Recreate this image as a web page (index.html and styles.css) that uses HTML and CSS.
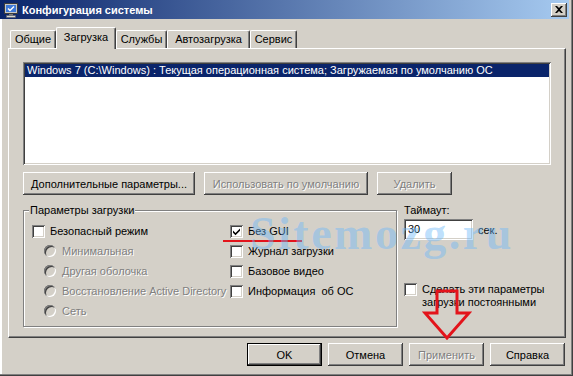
FILE: index.html
```html
<!DOCTYPE html>
<html lang="ru">
<head>
<meta charset="utf-8">
<title>Конфигурация системы</title>
<link rel="stylesheet" href="styles.css">
</head>
<body>
<div class="window">
  <div class="titlebar">
    <svg class="app-icon" width="16" height="16" viewBox="0 0 16 16">
      <rect x="1.5" y="1.5" width="13" height="10" fill="#c8c8c8" stroke="#3c3c3c"/>
      <rect x="3" y="3" width="10" height="7" fill="#3d78d8"/>
      <path d="M5 6.5l2 2 4-4" stroke="#fff" stroke-width="1.4" fill="none"/>
      <rect x="6" y="12" width="4" height="1.5" fill="#7a7a7a"/>
      <rect x="3.5" y="13.5" width="9" height="2" fill="#d8d8d8" stroke="#606060" stroke-width="0.6"/>
    </svg>
    <span class="title">Конфигурация системы</span>
    <button class="close" aria-label="Закрыть">
      <svg width="8" height="7" viewBox="0 0 8 7"><path d="M0 0h2l2 2 2-2h2L5 3.5 8 7H6L4 5 2 7H0l3-3.5z" fill="#000"/></svg>
    </button>
  </div>

  <div class="tabs">
    <div class="tab t1">Общие</div>
    <div class="tab tab-active t2">Загрузка</div>
    <div class="tab t3">Службы</div>
    <div class="tab t4">Автозагрузка</div>
    <div class="tab t5">Сервис</div>
  </div>

  <div class="panel">
    <div class="listbox">
      <div class="list-item selected">Windows 7 (C:\Windows) : Текущая операционная система; Загружаемая по умолчанию ОС</div>
    </div>

    <div class="btn-row">
      <button class="btn w-adv">Дополнительные параметры...</button>
      <button class="btn w-def" disabled>Использовать по умолчанию</button>
      <button class="btn w-del" disabled>Удалить</button>
    </div>

    <div class="lower">
      <fieldset class="group">
        <legend>Параметры загрузки</legend>
        <div class="grid">
          <label class="opt c1 r1"><span class="cb"></span>Безопасный режим</label>
          <label class="opt c1 r2 radio disabled"><span class="rb"></span>Минимальная</label>
          <label class="opt c1 r3 radio disabled"><span class="rb"></span>Другая оболочка</label>
          <label class="opt c1 r4 radio disabled"><span class="rb"></span>Восстановление Active Directory</label>
          <label class="opt c1 r5 radio disabled"><span class="rb"></span>Сеть</label>
          <label class="opt c2 r1"><span class="cb checked"><svg width="9" height="9" viewBox="0 0 9 9"><path d="M1 3.5l2.5 2.5L8 1.5v2.2L3.5 8.2 1 5.7z" fill="#000"/></svg></span>Без GUI</label>
          <label class="opt c2 r2"><span class="cb"></span>Журнал загрузки</label>
          <label class="opt c2 r3"><span class="cb"></span>Базовое видео</label>
          <label class="opt c2 r4"><span class="cb"></span>Информация&nbsp; об ОС</label>
        </div>
      </fieldset>

      <div class="side">
        <div class="timeout-label">Таймаут:</div>
        <div class="timeout-row">
          <div class="input">30</div>
          <span class="unit">сек.</span>
        </div>
        <label class="opt persist"><span class="cb"></span><span class="persist-text">Сделать эти параметры<br>загрузки постоянными</span></label>
      </div>
    </div>
  </div>

  <div class="footer">
    <button class="btn btn-foot default">OK</button>
    <button class="btn btn-foot">Отмена</button>
    <button class="btn btn-foot" disabled>Применить</button>
    <button class="btn btn-foot">Справка</button>
  </div>

  <div class="underline"></div>
  <div class="watermark">Sitemozg.ru</div>
  <svg class="arrow" width="50" height="56" viewBox="0 0 50 56">
    <polygon points="15,3 35,3 35,25 47,25 25,50 3,25 15,25" fill="none" stroke="#e3141b" stroke-width="3" stroke-linejoin="miter"/>
  </svg>
</div>
</body>
</html>
```

FILE: styles.css
```css
* { box-sizing: border-box; }
html, body { margin: 0; padding: 0; }
body {
  width: 573px;
  height: 376px;
  overflow: hidden;
  background: #d4d0c8;
  font-family: "Liberation Sans", Arial, sans-serif;
  font-size: 11px;
  color: #000;
}

.window {
  position: relative;
  width: 573px;
  height: 376px;
  background: #d4d0c8;
  padding: 0 4px 0 0;
  display: flex;
  flex-direction: column;
  box-shadow: inset -1px -1px #404040, inset -2px -2px #808080, inset 2px 0 #fff;
}

/* Title bar */
.titlebar {
  height: 19px;
  display: flex;
  align-items: center;
  padding-left: 3px;
  background: linear-gradient(to right, #0a246a, #a6caf0);
}
.app-icon { flex: none; }
.title {
  margin-left: 3px;
  color: #fff;
  font-weight: bold;
  font-size: 11px;
  white-space: nowrap;
}
.close {
  margin-left: auto;
  margin-right: 2px;
  width: 16px;
  height: 14px;
  padding: 0;
  border: 0;
  background: #d4d0c8;
  display: flex;
  align-items: center;
  justify-content: center;
  box-shadow: inset -1px -1px #404040, inset 1px 1px #fff, inset -2px -2px #808080, inset 2px 2px #d4d0c8;
}

/* Tabs */
.tabs {
  margin-top: 8px;
  height: 21px;
  display: flex;
  align-items: flex-end;
  padding-left: 10px;
  position: relative;
  z-index: 1;
}
.tab {
  height: 18px;
  display: flex;
  align-items: center;
  justify-content: center;
  background: #d4d0c8;
  border-left: 1px solid #fff;
  border-top: 1px solid #fff;
  border-right: 1px solid #404040;
  border-radius: 2px 2px 0 0;
  box-shadow: inset -1px 0 #808080;
  white-space: nowrap;
  padding-bottom: 1px;
}
.t1 { width: 46px; }
.t2 { width: 60px; }
.t3 { width: 51px; }
.t4 { width: 83px; }
.t5 { width: 47px; }
.tab-active {
  height: 22px;
  margin-bottom: -1px;
  padding-bottom: 3px;
}

/* Panel */
.panel {
  margin-left: 8px;
  width: 558px;
  height: 290px;
  padding: 13px 14px 0 14px;
  border-top: 1px solid #fff;
  border-left: 1px solid #fff;
  border-right: 1px solid #404040;
  border-bottom: 1px solid #404040;
  box-shadow: inset -1px -1px #808080;
}

.listbox {
  height: 103px;
  background: #fff;
  padding: 2px;
  box-shadow: inset 1px 1px #808080, inset -1px -1px #fff, inset 2px 2px #404040, inset -2px -2px #d4d0c8;
}
.list-item {
  height: 13px;
  line-height: 13px;
  padding-left: 2px;
  white-space: nowrap;
}
.selected {
  background: #0a246a;
  color: #fff;
}

/* Buttons */
.btn {
  height: 23px;
  padding: 0;
  margin: 0;
  border: 0;
  background: #d4d0c8;
  font-family: inherit;
  font-size: 11px;
  font-weight: normal;
  color: #000;
  box-shadow: inset -1px -1px #404040, inset 1px 1px #fff, inset -2px -2px #808080, inset 2px 2px #d4d0c8;
  white-space: nowrap;
}
.btn:disabled {
  color: #808080;
  text-shadow: 1px 1px 0 #fff;
}
.btn-row {
  margin-top: 7px;
  display: flex;
  gap: 9px;
}
.w-adv { width: 172px; }
.w-def { width: 164px; }
.w-del { width: 75px; }

/* Lower area */
.lower {
  margin-top: 9px;
  display: flex;
  align-items: flex-start;
}
.group {
  margin: 0;
  padding: 0 0 5px 8px;
  width: 374px;
  min-width: 0;
  border: 1px solid #808080;
  box-shadow: inset 1px 1px #fff, 1px 1px #fff;
}
.group legend {
  padding: 0 1px;
  margin-left: -3px;
  line-height: 13px;
  background: #d4d0c8;
}
.grid {
  padding-top: 4px;
  display: grid;
  grid-template-columns: 198px 1fr;
  grid-auto-rows: 20px;
}
.opt {
  display: flex;
  align-items: center;
  white-space: nowrap;
}
.c1 { grid-column: 1; }
.c2 { grid-column: 2; }
.r1 { grid-row: 1; }
.r2 { grid-row: 2; }
.r3 { grid-row: 3; }
.r4 { grid-row: 4; }
.r5 { grid-row: 5; }
.radio { padding-left: 12px; }
.disabled {
  color: #808080;
  text-shadow: 1px 1px 0 #fff;
}

.cb {
  flex: none;
  width: 13px;
  height: 13px;
  margin-right: 5px;
  background: #fff;
  display: flex;
  align-items: center;
  justify-content: center;
  box-shadow: inset 1px 1px #808080, inset -1px -1px #fff, inset 2px 2px #404040, inset -2px -2px #d4d0c8;
}
.rb {
  flex: none;
  width: 12px;
  height: 12px;
  margin-right: 6px;
  border-radius: 50%;
  background: #d4d0c8;
  box-shadow: inset 1px 1px #808080, inset -1px -1px #fff, inset 2px 2px #404040, inset -2px -2px #d4d0c8;
}

.side {
  margin-left: 7px;
  display: flex;
  flex-direction: column;
}
.timeout-label { line-height: 13px; }
.timeout-row {
  margin-top: 2px;
  display: flex;
  align-items: center;
}
.input {
  width: 69px;
  height: 21px;
  line-height: 21px;
  padding-left: 4px;
  background: #fff;
  box-shadow: inset 1px 1px #808080, inset -1px -1px #fff, inset 2px 2px #404040, inset -2px -2px #d4d0c8;
}
.unit { margin-left: 5px; }
.persist {
  margin-top: 43px;
  align-items: flex-start;
}
.persist-text { line-height: 13px; }

/* Footer */
.footer {
  margin-top: 5px;
  display: flex;
  justify-content: flex-end;
  gap: 6px;
  padding-right: 4px;
}
.btn-foot { width: 75px; }
.default {
  box-shadow: inset 0 0 0 1px #000, inset -2px -2px #404040, inset 2px 2px #fff, inset -3px -3px #808080;
}

/* Annotations overlaid on the screenshot */
.underline {
  position: absolute;
  left: 223px;
  top: 240px;
  width: 79px;
  height: 2px;
  background: #e3141b;
}
.watermark {
  position: absolute;
  left: 250px;
  top: 211px;
  font-family: "Liberation Serif", "Times New Roman", serif;
  font-weight: bold;
  font-size: 46px;
  line-height: 46px;
  letter-spacing: 2.5px;
  color: rgba(110, 185, 250, 0.45);
  pointer-events: none;
  white-space: nowrap;
}
.arrow {
  position: absolute;
  left: 422px;
  top: 288px;
}
```
